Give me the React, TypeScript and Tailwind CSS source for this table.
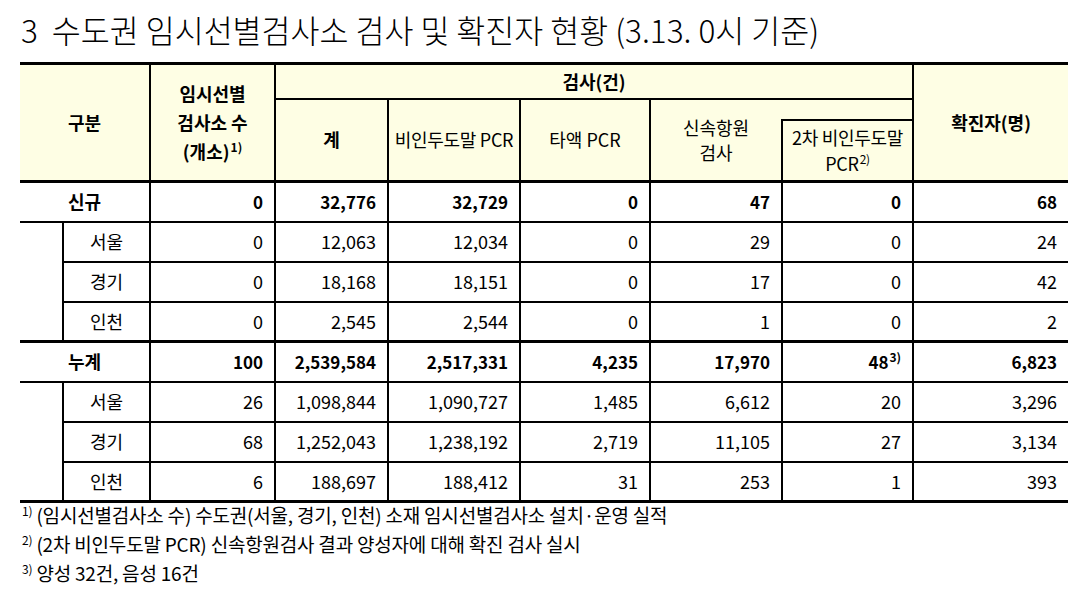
const font = { fontFamily: '"Noto Sans CJK KR", "Noto Sans", sans-serif' };

type Row = {
  name: string;
  bold?: boolean;
  sub?: boolean;
  values: (string | { v: string; sup: string })[];
};

const ROWS: Row[] = [
  { name: "신규", bold: true, values: ["0", "32,776", "32,729", "0", "47", "0", "68"] },
  { name: "서울", sub: true, values: ["0", "12,063", "12,034", "0", "29", "0", "24"] },
  { name: "경기", sub: true, values: ["0", "18,168", "18,151", "0", "17", "0", "42"] },
  { name: "인천", sub: true, values: ["0", "2,545", "2,544", "0", "1", "0", "2"] },
  { name: "누계", bold: true, values: ["100", "2,539,584", "2,517,331", "4,235", "17,970", { v: "48", sup: "3)" }, "6,823"] },
  { name: "서울", sub: true, values: ["26", "1,098,844", "1,090,727", "1,485", "6,612", "20", "3,296"] },
  { name: "경기", sub: true, values: ["68", "1,252,043", "1,238,192", "2,719", "11,105", "27", "3,134"] },
  { name: "인천", sub: true, values: ["6", "188,697", "188,412", "31", "253", "1", "393"] },
];

const Sup = ({ children }: { children: string }) => (
  <span className="relative -top-[7px] text-[12px] leading-none ml-[1px]">{children}</span>
);

export default function App() {
  const th = "border-2 border-black bg-[#fefee4] text-center align-middle p-0 text-[18px]";
  return (
    <div className="w-[1080px] h-[592px] bg-white text-black" style={font}>
      <h1 className="pl-[21px] pt-[8px] h-[62px] text-[31.5px] leading-[42px] font-light whitespace-pre">
        3  수도권 임시선별검사소 검사 및 확진자 현황 (3.13. 0시 기준)
      </h1>
      <table className="ml-[20px] w-[1048px] table-fixed border-collapse">
        <colgroup>
          <col className="w-[43px]" />
          <col className="w-[87px]" />
          <col className="w-[125px]" />
          <col className="w-[113px]" />
          <col className="w-[132px]" />
          <col className="w-[130px]" />
          <col className="w-[132px]" />
          <col className="w-[131px]" />
          <col className="w-[155px]" />
        </colgroup>
        <thead>
          <tr className="h-[35px]">
            <th rowSpan={3} colSpan={2} className={`${th} border-l-0 border-t-[3px] font-bold`}>구분</th>
            <th rowSpan={3} className={`${th} border-t-[3px] font-bold leading-[29px]`}>
              임시선별<br />검사소 수<br />(개소)<Sup>1)</Sup>
            </th>
            <th colSpan={5} className={`${th} border-t-[3px] font-bold`}>검사(건)</th>
            <th rowSpan={3} className={`${th} border-r-0 border-t-[3px] font-bold`}>확진자(명)</th>
          </tr>
          <tr className="h-[21px]">
            <th rowSpan={2} className={`${th} font-bold`}>계</th>
            <th rowSpan={2} className={`${th} font-normal whitespace-nowrap tracking-[-0.3px]`}>비인두도말 PCR</th>
            <th rowSpan={2} className={`${th} font-normal`}>타액 PCR</th>
            <th rowSpan={2} className={`${th} font-normal border-r-0 leading-[25px]`}>신속항원<br />검사</th>
            <th className="bg-[#fefee4] border-t-2 border-black p-0"></th>
          </tr>
          <tr className="h-[62px]">
            <th className={`${th} font-normal leading-[26px] whitespace-nowrap tracking-[-0.3px]`}>
              2차 비인두도말<br />PCR<Sup>2)</Sup>
            </th>
          </tr>
        </thead>
        <tbody>
          {ROWS.map((r, i) => {
            const topThick = i === 0 || i === 4;
            const last = i === ROWS.length - 1;
            const b = `border-2 border-black ${topThick ? "border-t-[3px]" : ""} ${last ? "border-b-[3px]" : ""}`;
            return (
              <tr key={i} className={`h-[40px] ${r.bold ? "font-bold text-[17px]" : "text-[18px]"}`}>
                {r.sub ? (
                  <>
                    {(i === 1 || i === 5) && (
                      <td rowSpan={3} className="border-2 border-l-0 border-black border-b-[3px] p-0"></td>
                    )}
                    <td className={`${b} text-center p-0 text-[18px]`}>{r.name}</td>
                  </>
                ) : (
                  <td colSpan={2} className={`${b} border-l-0 text-center p-0 text-[18px]`}>{r.name}</td>
                )}
                {r.values.map((v, j) => (
                  <td
                    key={j}
                    className={`${b} ${j === r.values.length - 1 ? "border-r-0" : ""} text-right pr-[11px] pl-0 py-0`}
                  >
                    {typeof v === "string" ? v : (<>{v.v}<Sup>{v.sup}</Sup></>)}
                  </td>
                ))}
              </tr>
            );
          })}
        </tbody>
      </table>
      <div className="pl-[21px] -mt-[3px] text-[19px] leading-[29px] tracking-[-0.2px]">
        <p><Sup>1)</Sup> (임시선별검사소 수) 수도권(서울, 경기, 인천) 소재 임시선별검사소 설치·운영 실적</p>
        <p><Sup>2)</Sup> (2차 비인두도말 PCR) 신속항원검사 결과 양성자에 대해 확진 검사 실시</p>
        <p><Sup>3)</Sup> 양성 32건, 음성 16건</p>
      </div>
    </div>
  );
}
